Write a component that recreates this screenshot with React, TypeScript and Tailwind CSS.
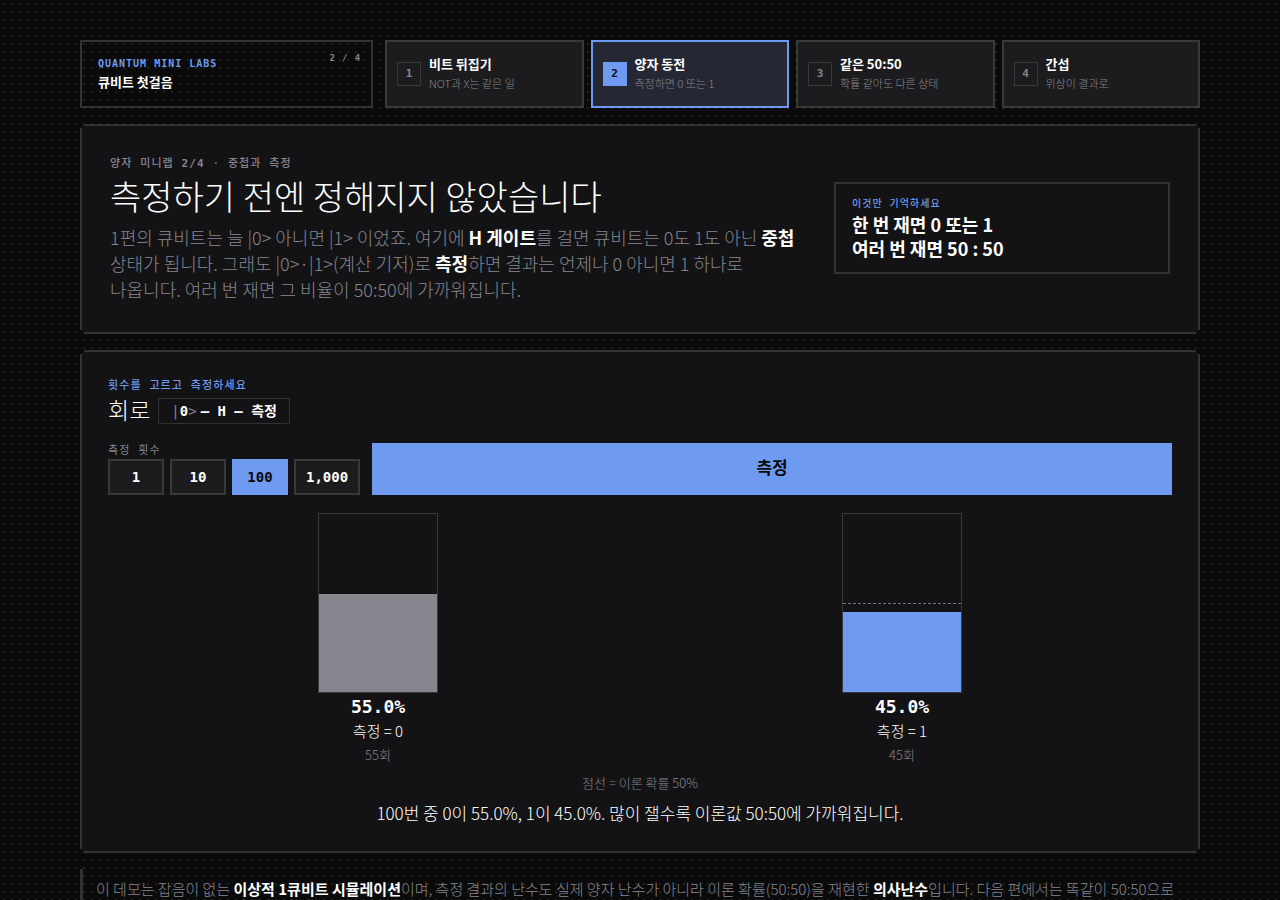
import React, { useState } from "react";

const STEPS = [
  { id: 1, title: "비트 뒤집기", desc: "NOT과 X는 같은 일" },
  { id: 2, title: "양자 동전", desc: "측정하면 0 또는 1" },
  { id: 3, title: "같은 50:50", desc: "확률 같아도 다른 상태" },
  { id: 4, title: "간섭", desc: "위상이 결과로" },
];

const SHOTS = [1, 10, 100, 1000];

const RESULTS = [
  { value: 0, percent: 55, count: 55, fill: "bg-[#86858e]" },
  { value: 1, percent: 45, count: 45, fill: "bg-[#6e9bef]" },
];

// Latin goes to the mono face, Korean falls through to Noto
const MONO = "font-['DejaVu_Sans_Mono','Noto_Sans_CJK_KR',monospace]";

// card with a 2px frame and stepped pixel corners
const CARD =
  "border-2 border-[#323234] bg-[#131315] [clip-path:polygon(0_4px,2px_4px,2px_2px,4px_2px,4px_0,calc(100%-4px)_0,calc(100%-4px)_2px,calc(100%-2px)_2px,calc(100%-2px)_4px,100%_4px,100%_calc(100%-4px),calc(100%-2px)_calc(100%-4px),calc(100%-2px)_calc(100%-2px),calc(100%-4px)_calc(100%-2px),calc(100%-4px)_100%,4px_100%,4px_calc(100%-2px),2px_calc(100%-2px),2px_calc(100%-4px),0_calc(100%-4px))]";

const Header: React.FC = () => (
  <header className="grid grid-cols-[293px_1fr] gap-3">
    <div className="relative flex h-[68px] flex-col justify-center border-2 border-[#323234] px-4 pb-0.5">
      <p className={`${MONO} text-[10px] leading-[18px] font-bold tracking-widest text-[#6e9bef]`}>
        QUANTUM MINI LABS
      </p>
      <p className="text-[13px] leading-[18px] font-bold">큐비트 첫걸음</p>
      <span className={`${MONO} absolute top-2 right-2.5 text-[9px] leading-4 font-bold tracking-widest text-[#86858e]`}>
        2 / 4
      </span>
    </div>
    <nav className="grid grid-cols-4 gap-[7px]">
      {STEPS.map((step) => {
        const active = step.id === 2;
        return (
          <a
            key={step.id}
            href={`#lab-${step.id}`}
            className={`flex items-center gap-2 border-2 px-2.5 ${
              active ? "border-[#6e9bef] bg-[#252834]" : "border-[#39393b] bg-[#1c1c1e]"
            }`}
          >
            <span
              className={`${MONO} flex size-6 shrink-0 items-center justify-center border text-[11px] font-bold ${
                active
                  ? "border-[#6e9bef] bg-[#6e9bef] text-[#0a0a0b]"
                  : "border-[#39393b] text-[#86858e]"
              }`}
            >
              {step.id}
            </span>
            <span className="flex flex-col pb-0.5 whitespace-nowrap">
              <span className="text-[13px] leading-5 font-bold">{step.title}</span>
              <span className="text-[11px] leading-[18px] font-light text-[#86858e]">{step.desc}</span>
            </span>
          </a>
        );
      })}
    </nav>
  </header>
);

const Intro: React.FC = () => (
  <section className={`${CARD} mt-4 grid grid-cols-[1fr_336px] items-center gap-6 px-7 pt-7 pb-[30px]`}>
    <div>
      <p className={`${MONO} text-[11px] leading-5 font-medium tracking-widest text-[#86858e]`}>
        양자 미니랩 <b>2/4</b> · 중첩과 측정
      </p>
      <h1 className="mt-0.5 text-[34px] leading-10 font-light whitespace-nowrap">
        측정하기 전엔 정해지지 않았습니다
      </h1>
      <p className="mt-2 text-lg leading-[26px] font-light break-keep text-[#86858e]">
        1편의 큐비트는 늘 |0&gt; 아니면 |1&gt; 이었죠. 여기에 <b className="font-bold text-white">H 게이트</b>를
        걸면 큐비트는 0도 1도 아닌 <b className="font-bold text-white">중첩</b>
        <br />
        상태가 됩니다. 그래도 |0&gt;·|1&gt;(계산 기저)로 <b className="font-bold text-white">측정</b>하면 결과는
        언제나 0 아니면 1 하나로
        <br />
        나옵니다. 여러 번 재면 그 비율이 50:50에 가까워집니다.
      </p>
    </div>
    <aside className="border-2 border-[#323234] px-4 py-3">
      <p className={`${MONO} text-[10px] leading-4 font-medium tracking-widest text-[#6e9bef]`}>
        이것만 기억하세요
      </p>
      <p className="text-lg leading-6 font-bold">
        한 번 재면 0 또는 1<br />
        여러 번 재면 50 : 50
      </p>
    </aside>
  </section>
);

const Circuit: React.FC = () => {
  const [shots, setShots] = useState(100);

  return (
    <section className={`${CARD} mt-4 px-[26px] py-[26px]`}>
      <p className={`${MONO} text-[11px] leading-4 font-medium tracking-widest text-[#6e9bef]`}>
        횟수를 고르고 측정하세요
      </p>
      <div className="mt-1 flex items-center gap-2">
        <h2 className="pb-1 text-[23px] leading-[22px] font-light">회로</h2>
        <code
          className={`${MONO} border border-[#323234] px-3 text-sm leading-6 font-bold whitespace-pre`}
        >
          <span className="font-normal text-[#86858e]">|</span>0
          <span className="mr-1 font-normal text-[#86858e]">&gt;</span>— H — 측정
        </code>
      </div>

      <div className="mt-[19px] flex items-stretch gap-3">
        <fieldset>
          <legend className={`${MONO} text-[11px] leading-4 font-normal tracking-widest text-[#86858e]`}>
            측정 횟수
          </legend>
          <div className="flex gap-1.5">
            {SHOTS.map((n) => (
              <button
                key={n}
                type="button"
                aria-pressed={n === shots}
                onClick={() => setShots(n)}
                className={`${MONO} h-9 min-w-14 border-2 px-2.5 text-sm font-bold ${
                  n === shots
                    ? "border-[#6e9bef] bg-[#6e9bef] text-[#0a0a0b]"
                    : "border-[#39393b] bg-[#1c1c1e] text-white"
                }`}
              >
                {n.toLocaleString("en-US")}
              </button>
            ))}
          </div>
        </fieldset>
        <button type="button" className="flex-1 bg-[#6e9bef] pb-1 text-[17px] font-bold text-[#0a0a0b]">
          측정
        </button>
      </div>

      <div className="mt-[18px] grid grid-cols-2 gap-4 px-4">
        {RESULTS.map((r) => (
          <div key={r.value} className="flex flex-col items-center">
            <div className="relative flex h-[180px] w-[120px] items-end border border-[#39393b]">
              <div className="absolute inset-x-0 top-1/2 border-t border-dashed border-[#76757e]" />
              <div className={`relative w-full ${r.fill}`} style={{ height: `${r.percent}%` }} />
            </div>
            <p className={`${MONO} mt-0.5 text-lg leading-6 font-bold`}>{r.percent.toFixed(1)}%</p>
            <p className="text-[15px] leading-6 font-light">측정 = {r.value}</p>
            <p className="text-[13px] leading-6 font-light text-[#86858e]">{r.count}회</p>
          </div>
        ))}
      </div>

      <p className="mt-1.5 text-center text-[13px] leading-5 font-light text-[#86858e]">점선 = 이론 확률 50%</p>
      <p className="mt-2 text-center text-[17px] leading-6 font-light">
        100번 중 0이 55.0%, 1이 45.0%. 많이 잴수록 이론값 50:50에 가까워집니다.
      </p>
    </section>
  );
};

const App: React.FC = () => {
  return (
    <div className="min-h-screen bg-[#0a0a0b] bg-[radial-gradient(#222224_1px,transparent_1px)] bg-size-[8px_8px] font-['Noto_Sans_CJK_KR',sans-serif] text-white">
      <main className="mx-auto max-w-[1200px] px-10 pt-10">
        <Header />
        <Intro />
        <Circuit />
        <p className="mt-4 border-l-3 border-[#323234] py-2 pl-[13px] text-[15px] leading-6 font-light text-[#86858e]">
          이 데모는 잡음이 없는 <b className="font-bold text-white">이상적 1큐비트 시뮬레이션</b>이며, 측정 결과의
          난수도 실제 양자 난수가 아니라 이론 확률(50:50)을 재현한{" "}
          <b className="font-bold text-white">의사난수</b>입니다. 다음 편에서는 똑같이 50:50으로
        </p>
      </main>
    </div>
  );
};

export default App;
